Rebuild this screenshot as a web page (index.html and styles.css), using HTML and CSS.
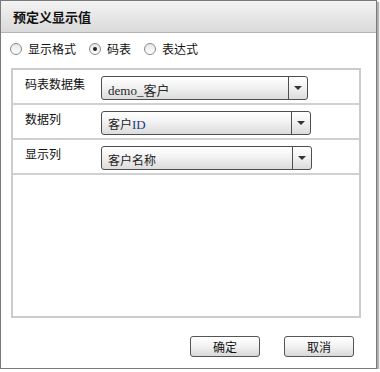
FILE: index.html
```html
<!DOCTYPE html>
<html>
<head>
<meta charset="utf-8">
<link rel="stylesheet" href="styles.css">
</head>
<body>
<div class="dialog">
  <div class="title">预定义显示值</div>
  <div class="radios">
    <label class="radio"><span class="dot"></span>显示格式</label>
    <label class="radio"><span class="dot on"></span>码表</label>
    <label class="radio"><span class="dot"></span>表达式</label>
  </div>
  <div class="panel">
    <div class="row">
      <span class="lbl">码表数据集</span>
      <div class="select s1"><span class="val">demo_客户</span><span class="arrow"></span></div>
    </div>
    <div class="row">
      <span class="lbl">数据列</span>
      <div class="select s2"><span class="val">客户<span class="serif">ID</span></span><span class="arrow"></span></div>
    </div>
    <div class="row">
      <span class="lbl">显示列</span>
      <div class="select s3"><span class="val">客户名称</span><span class="arrow"></span></div>
    </div>
  </div>
  <div class="buttons">
    <button class="btn">确定</button>
    <button class="btn">取消</button>
  </div>
</div>
</body>
</html>
```

FILE: styles.css
```css
html, body {
  margin: 0;
  padding: 0;
  background: #ffffff;
}
body {
  font-family: "Noto Sans CJK SC", "Noto Sans", sans-serif;
  font-size: 12px;
  color: #111;
}
.dialog {
  width: 377px;
  height: 369px;
  box-sizing: border-box;
  border: 1px solid #7a7a7a;
  box-shadow: 2px 2px 1px #b0b0b0;
  background: #fff;
  display: flex;
  flex-direction: column;
}
.title {
  height: 31px;
  line-height: 31px;
  border-bottom: 1px solid #b4b4b4;
  background: linear-gradient(#f3f3f3, #dadada);
  padding-left: 12px;
  font-size: 13px;
  font-weight: bold;
  color: #111;
}
.radios {
  display: flex;
  align-items: center;
  height: 18px;
  margin-top: 7px;
  padding-left: 9px;
}
.radio {
  display: flex;
  align-items: center;
  margin-right: 13px;
  line-height: 18px;
}
.dot {
  width: 10px;
  height: 10px;
  border: 1px solid #8a8a8a;
  border-radius: 50%;
  background: linear-gradient(#e6e6e6, #ffffff);
  margin-right: 6px;
  position: relative;
}
.dot.on::after {
  content: "";
  position: absolute;
  left: 3px;
  top: 3px;
  width: 4px;
  height: 4px;
  border-radius: 50%;
  background: #222;
}
.panel {
  margin: 10px 15px 0 10px;
  height: 250px;
  box-sizing: border-box;
  border: 2px solid #cccccc;
}
.row {
  height: 33px;
  border-bottom: 2px solid #d0d0d0;
  display: flex;
  align-items: center;
  padding-left: 12px;
}
.lbl {
  width: 76px;
  margin-bottom: 6px;
  font-size: 12px;
  color: #111;
}
.select {
  height: 24px;
  box-sizing: border-box;
  border: 1px solid #4e4e4e;
  border-radius: 3px;
  background: linear-gradient(#ffffff, #f4f4f4 40%, #dcdcdc);
  display: flex;
  align-items: center;
  margin-top: 2px;
}
.s1 { width: 207px; }
.s2 { width: 210px; }
.s3 { width: 211px; }
.val {
  flex: 1;
  padding-left: 6px;
  padding-top: 3px;
  font-size: 12px;
  color: #222;
}
.s1 .val {
  font-family: "Liberation Serif", "Noto Sans CJK SC", serif;
  font-size: 13px;
  color: #2a2a2a;
}
.serif {
  font-family: "Liberation Serif", serif;
  font-size: 13px;
  color: #1a3a7a;
}
.arrow {
  width: 18px;
  height: 100%;
  border-left: 1px solid #4e4e4e;
  position: relative;
}
.arrow::after {
  content: "";
  position: absolute;
  left: 5px;
  top: 9px;
  border-left: 4px solid transparent;
  border-right: 4px solid transparent;
  border-top: 4px solid #333;
}
.buttons {
  display: flex;
  justify-content: flex-end;
  gap: 24px;
  margin-top: 18px;
  padding-right: 22px;
}
.btn {
  width: 70px;
  height: 21px;
  box-sizing: border-box;
  border: 1px solid #555;
  border-radius: 3px;
  background: linear-gradient(#ffffff, #f2f2f2 50%, #d8d8d8);
  font-family: "Noto Sans CJK SC", sans-serif;
  font-size: 12px;
  color: #111;
  padding: 0;
  line-height: 18px;
}
```
